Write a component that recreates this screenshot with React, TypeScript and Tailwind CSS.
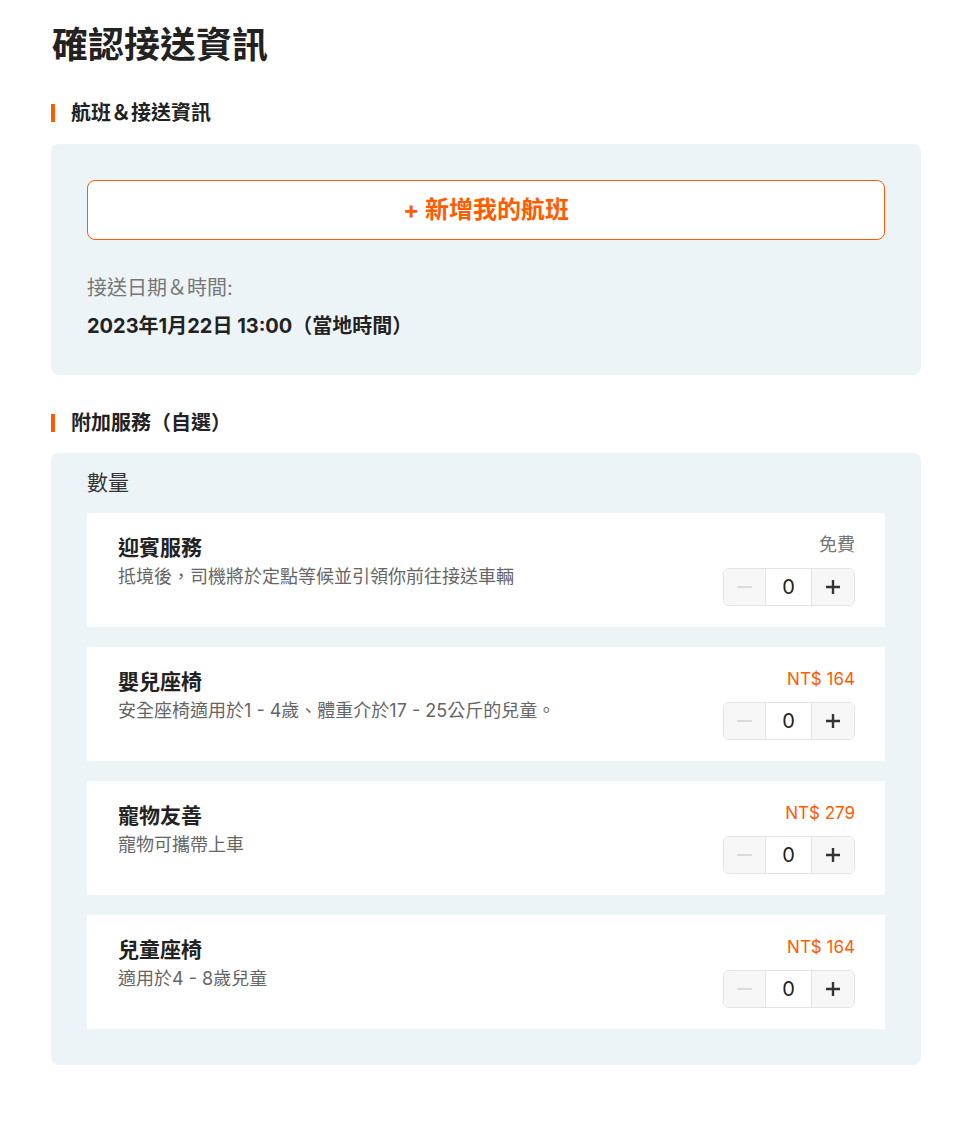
import React from 'react';

// ── Data ───────────────────────────────────────────────────────────────────

const ADDONS = [
  { id: 'meet', title: '迎賓服務', desc: '抵境後，司機將於定點等候並引領你前往接送車輛', price: '免費', free: true },
  { id: 'infant', title: '嬰兒座椅', desc: '安全座椅適用於1 - 4歲、體重介於17 - 25公斤的兒童。', price: 'NT$ 164', free: false },
  { id: 'pet', title: '寵物友善', desc: '寵物可攜帶上車', price: 'NT$ 279', free: false },
  { id: 'child', title: '兒童座椅', desc: '適用於4 - 8歲兒童', price: 'NT$ 164', free: false },
];

const FONT = "font-['Inter','Noto_Sans_CJK_TC',sans-serif]";

// ── Parts ──────────────────────────────────────────────────────────────────

function SectionTitle({ children }: { children: React.ReactNode }) {
  return (
    <div className="flex items-center gap-4 h-[26px]">
      <span className="w-1 h-[18px] bg-[#ff5b00]" />
      <h2 className="text-[20px] font-bold text-[#222] leading-[26px]">{children}</h2>
    </div>
  );
}

function Stepper() {
  return (
    <div className="flex h-[38px] w-[132px] rounded-md border border-[#e3e3e3] overflow-hidden">
      <button type="button" className="w-[41px] flex items-center justify-center bg-[#f7f7f7]">
        <span className="block w-[15px] h-[2px] bg-[#dcdcdc]" />
      </button>
      <div className="flex-1 flex items-center justify-center border-x border-[#e3e3e3] bg-white text-[20px] text-[#222]">0</div>
      <button type="button" className="w-[42px] flex items-center justify-center bg-[#f7f7f7]">
        <svg width="16" height="16" viewBox="0 0 16 16">
          <path d="M8 1v14M1 8h14" stroke="#333" strokeWidth="2.4" />
        </svg>
      </button>
    </div>
  );
}

function AddonRow({ item }: { item: (typeof ADDONS)[number] }) {
  return (
    <div className="flex justify-between bg-white h-[114px] pl-[31px] pr-[30px] pt-[20px]">
      <div>
        <div className="text-[21px] font-semibold text-[#222] leading-[30px]">{item.title}</div>
        <div className="text-[18px] text-[#666] leading-[26px] mt-[1px]">{item.desc}</div>
      </div>
      <div className="flex flex-col items-end">
        <div className={`leading-[24px] ${item.free ? 'text-[18px] text-[#777]' : 'text-[17px] text-[#ff5b00]'}`}>{item.price}</div>
        <div className="mt-[11px]">
          <Stepper />
        </div>
      </div>
    </div>
  );
}

// ── Page ───────────────────────────────────────────────────────────────────

export default function App() {
  return (
    <div className={`${FONT} bg-white min-h-[1126px] pl-[51px] pr-[35px] pt-[23px]`}>
      <h1 className="text-[36px] font-bold text-[#222] leading-[44px] ml-[1px]">確認接送資訊</h1>

      <div className="mt-[33px]">
        <SectionTitle>航班＆接送資訊</SectionTitle>
      </div>
      <div className="mt-[18px] rounded-lg bg-[#edf4f8] px-9 pt-9 pb-[35px]">
        <button
          type="button"
          className="w-full h-[60px] rounded-lg border border-[#ff5b00] bg-white text-[24px] font-bold text-[#ff5b00]"
        >
          + 新增我的航班
        </button>
        <div className="mt-[34px] text-[20px] text-[#777] leading-[28px]">接送日期＆時間:</div>
        <div className="mt-[10px] text-[20px] font-bold text-[#222] leading-[28px]">2023年1月22日 13:00（當地時間）</div>
      </div>

      <div className="mt-[35px]">
        <SectionTitle>附加服務（自選）</SectionTitle>
      </div>
      <div className="mt-[17px] rounded-lg bg-[#edf4f8] px-9 pt-[14px] pb-9">
        <div className="text-[21px] text-[#333] leading-[32px]">數量</div>
        <div className="mt-[14px] flex flex-col gap-5">
          {ADDONS.map((a) => (
            <AddonRow key={a.id} item={a} />
          ))}
        </div>
      </div>
    </div>
  );
}
